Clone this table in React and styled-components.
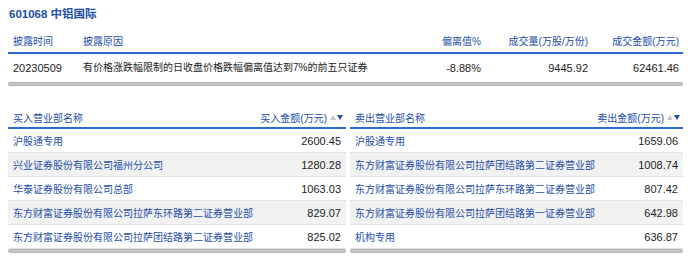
import React from "react";
import styled, { createGlobalStyle } from "styled-components";

const GlobalStyle = createGlobalStyle`
  body {
    margin: 0;
    background: #fff;
    font-family: "Liberation Sans", "Noto Sans CJK SC", sans-serif;
  }
`;

const Page = styled.div`
  width: 700px;
  height: 266px;
  padding: 0 8px;
  box-sizing: border-box;
  overflow: hidden;
`;

const Title = styled.div`
  height: 30px;
  line-height: 29px;
  padding-left: 1px;
  font-size: 11.5px;
  font-weight: bold;
  color: #1d4ea6;
`;

const TopGrid = styled.div`
  display: grid;
  grid-template-columns: 70px 322px 85px 107px 91px;
  width: 675px;
`;

const HeadCell = styled.div`
  height: 22px;
  line-height: 24px;
  padding: 0 5px 0 ${p => (p.$right ? "0" : "5px")};
  padding-right: ${p => (p.$right ? "4px" : "0")};
  font-size: 10px;
  color: #1d4ea6;
  text-align: ${p => (p.$right ? "right" : "left")};
  border-bottom: 2px solid #2e6bd0;
  white-space: nowrap;
`;

const Cell = styled.div`
  height: 28px;
  line-height: 28px;
  padding-left: ${p => (p.$right ? "0" : "5px")};
  padding-right: ${p => (p.$right ? "4px" : "0")};
  font-size: ${p => (p.$num ? "11px" : "10px")};
  color: #222;
  text-align: ${p => (p.$right ? "right" : "left")};
  white-space: nowrap;
`;

const Scroll = styled.div`
  height: 4px;
  border-radius: 3px;
  background: #c6c6c6;
  border: 1px solid #b4b4b4;
  box-sizing: border-box;
`;

const Bottom = styled.div`
  display: grid;
  grid-template-columns: 338px 333px;
  column-gap: 4px;
  margin-top: 20px;
`;

const Table = styled.div`
  display: flex;
  flex-direction: column;
`;

const Row = styled.div`
  display: flex;
  justify-content: space-between;
  align-items: center;
  height: 24px;
  padding: 0 5px 0 5px;
  background: ${p => (p.$alt ? "#f2f2f2" : "#fff")};
  border-bottom: 1px solid #e3e3e3;
  box-sizing: border-box;
`;

const HeadRow = styled(Row)`
  height: 23px;
  border-bottom: 2px solid #2e6bd0;
  padding-top: 1px;
  padding-right: 3px;
`;

const HeadText = styled.span`
  font-size: 10px;
  color: #1d4ea6;
  display: flex;
  align-items: center;
`;

const Sort = styled.span`
  display: inline-flex;
  margin-left: 3px;
  gap: 1px;
  align-items: center;
`;

const Tri = styled.span`
  width: 0;
  height: 0;
  border-left: 3px solid transparent;
  border-right: 3px solid transparent;
  ${p =>
    p.$up
      ? "border-bottom: 5px solid #c4c4c4;"
      : "border-top: 5px solid #1d4ea6;"}
`;

const Name = styled.span`
  font-size: 10px;
  color: #1d4ea6;
`;

const Amount = styled.span`
  font-size: 11px;
  color: #222;
`;

const buys = [
  ["沪股通专用", "2600.45"],
  ["兴业证券股份有限公司福州分公司", "1280.28"],
  ["华泰证券股份有限公司总部", "1063.03"],
  ["东方财富证券股份有限公司拉萨东环路第二证券营业部", "829.07"],
  ["东方财富证券股份有限公司拉萨团结路第二证券营业部", "825.02"],
];

const sells = [
  ["沪股通专用", "1659.06"],
  ["东方财富证券股份有限公司拉萨团结路第二证券营业部", "1008.74"],
  ["东方财富证券股份有限公司拉萨东环路第二证券营业部", "807.42"],
  ["东方财富证券股份有限公司拉萨团结路第一证券营业部", "642.98"],
  ["机构专用", "636.87"],
];

function Broker({ title, amountLabel, rows }) {
  return (
    <div>
      <Table>
        <HeadRow>
          <HeadText>{title}</HeadText>
          <HeadText>
            {amountLabel}
            <Sort>
              <Tri $up />
              <Tri />
            </Sort>
          </HeadText>
        </HeadRow>
        {rows.map((r, i) => (
          <Row key={i} $alt={i % 2 === 1}>
            <Name>{r[0]}</Name>
            <Amount>{r[1]}</Amount>
          </Row>
        ))}
      </Table>
      <Scroll />
    </div>
  );
}

export default function App() {
  return (
    <>
      <GlobalStyle />
      <Page>
        <Title>601068 中铝国际</Title>
        <TopGrid>
          <HeadCell>披露时间</HeadCell>
          <HeadCell>披露原因</HeadCell>
          <HeadCell $right>偏离值%</HeadCell>
          <HeadCell $right>成交量(万股/万份)</HeadCell>
          <HeadCell $right>成交金额(万元)</HeadCell>
          <Cell $num>20230509</Cell>
          <Cell>有价格涨跌幅限制的日收盘价格跌幅偏离值达到7%的前五只证券</Cell>
          <Cell $right $num>-8.88%</Cell>
          <Cell $right $num>9445.92</Cell>
          <Cell $right $num>62461.46</Cell>
        </TopGrid>
        <Scroll style={{ width: 675 }} />
        <Bottom>
          <Broker title="买入营业部名称" amountLabel="买入金额(万元)" rows={buys} />
          <Broker title="卖出营业部名称" amountLabel="卖出金额(万元)" rows={sells} />
        </Bottom>
      </Page>
    </>
  );
}
